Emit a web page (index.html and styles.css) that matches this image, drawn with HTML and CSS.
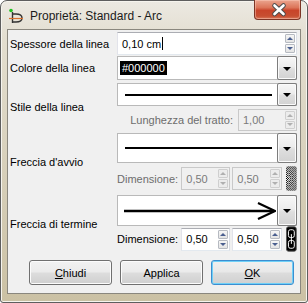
FILE: index.html
```html
<!DOCTYPE html>
<html lang="it">
<head>
    <meta charset="UTF-8">
    <title>Proprietà: Standard - Arc</title>
    <link rel="stylesheet" href="styles.css">
</head>
<body>
    <div class="window">
        <div class="titlebar">
            <svg class="app-icon" width="16" height="16" viewBox="0 0 16 16">
                <circle cx="3" cy="2.5" r="1.8" fill="#1fc21f"/>
                <path d="M4.5 4 V15" stroke="#333" stroke-width="1.4"/>
                <path d="M4.5 6 H8 C12 6 14 7.5 14 10 C14 12.5 12 14 8 14 H4.5" fill="none" stroke="#333" stroke-width="1.4"/>
                <path d="M1 10.5 H15" stroke="#d8702e" stroke-width="1.2"/>
            </svg>
            <span class="title">Proprietà: Standard - Arc</span>
            <div class="close">
                <svg width="46" height="19" viewBox="0 0 46 19">
                    <path d="M19.5 5.5 L28.5 14 M28.5 5.5 L19.5 14" stroke="#4c4c4c" stroke-width="4.6" stroke-linecap="round"/>
                    <path d="M19.5 5.5 L28.5 14 M28.5 5.5 L19.5 14" stroke="#fff" stroke-width="2.6" stroke-linecap="round"/>
                </svg>
            </div>
        </div>

        <div class="client">
            <div class="row r1">
                <div class="label">Spessore della linea</div>
                <div class="ctl">
                    <div class="spin full h24">
                        <span class="val">0,10 cm<span class="caret"></span></span>
                        <div class="arrows"><span class="up"></span><span class="down"></span></div>
                    </div>
                </div>
            </div>

            <div class="row r2">
                <div class="label">Colore della linea</div>
                <div class="ctl">
                    <div class="combo h24">
                        <div class="field"><span class="sel">#000000</span></div>
                        <div class="drop"></div>
                    </div>
                </div>
            </div>

            <div class="row r3">
                <div class="label">Stile della linea</div>
                <div class="ctl">
                    <div class="combo h23">
                        <div class="field"><span class="line"></span></div>
                        <div class="drop"></div>
                    </div>
                    <div class="sub sub-len">
                        <span class="muted">Lunghezza del tratto:</span>
                        <div class="spin off w60">
                            <span class="val">1,00</span>
                            <div class="arrows"><span class="up"></span><span class="down"></span></div>
                        </div>
                    </div>
                </div>
            </div>

            <div class="row r4">
                <div class="label">Freccia d'avvio</div>
                <div class="ctl">
                    <div class="combo h30">
                        <div class="field"><span class="line"></span></div>
                        <div class="drop"></div>
                    </div>
                    <div class="sub sub-dim h25">
                        <span class="dim-label muted">Dimensione:</span>
                        <div class="spin off w49">
                            <span class="val">0,50</span>
                            <div class="arrows"><span class="up"></span><span class="down"></span></div>
                        </div>
                        <div class="spin off w50">
                            <span class="val">0,50</span>
                            <div class="arrows"><span class="up"></span><span class="down"></span></div>
                        </div>
                        <svg class="chain" width="11" height="25" viewBox="0 0 11 25">
                            <defs>
                                <pattern id="dots" width="2" height="2" patternUnits="userSpaceOnUse">
                                    <rect width="2" height="2" fill="#fff"/>
                                    <rect width="1" height="1" fill="#000"/>
                                    <rect x="1" y="1" width="1" height="1" fill="#000"/>
                                </pattern>
                            </defs>
                            <rect x="0" y="0" width="11" height="25" rx="2" fill="url(#dots)"/>
                            <rect x="2.5" y="3.5" width="6" height="8" rx="2" fill="none" stroke="#9a9a9a"/>
                            <rect x="2.5" y="13.5" width="6" height="8" rx="2" fill="none" stroke="#9a9a9a"/>
                            <path d="M5.5 8 V17" stroke="#9a9a9a"/>
                        </svg>
                    </div>
                </div>
            </div>

            <div class="row r5">
                <div class="label">Freccia di termine</div>
                <div class="ctl">
                    <div class="combo h31">
                        <div class="field">
                            <svg class="arrow-line" width="152" height="20" viewBox="0 0 152 20">
                                <path d="M0 10 H150" stroke="#000" stroke-width="2.4"/>
                                <path d="M134 2 L151 10 L134 18" fill="none" stroke="#000" stroke-width="2.2"/>
                            </svg>
                        </div>
                        <div class="drop"></div>
                    </div>
                    <div class="sub sub-dim h26">
                        <span class="dim-label">Dimensione:</span>
                        <div class="spin w49 h24">
                            <span class="val">0,50</span>
                            <div class="arrows"><span class="up"></span><span class="down"></span></div>
                        </div>
                        <div class="spin w50 h24">
                            <span class="val">0,50</span>
                            <div class="arrows"><span class="up"></span><span class="down"></span></div>
                        </div>
                        <svg class="chain" width="11" height="26" viewBox="0 0 11 26">
                            <rect x="0.5" y="0.5" width="10" height="25" rx="2" fill="#000" stroke="#555"/>
                            <rect x="2.5" y="3.5" width="6" height="8" rx="2" fill="none" stroke="#fff"/>
                            <rect x="2.5" y="14.5" width="6" height="8" rx="2" fill="none" stroke="#fff"/>
                            <path d="M5.5 8 V18" stroke="#fff"/>
                        </svg>
                    </div>
                </div>
            </div>

            <div class="buttons">
                <div class="btn"><span><u>C</u>hiudi</span></div>
                <div class="btn">Applica</div>
                <div class="btn default"><span><u>O</u>K</span></div>
            </div>
        </div>
    </div>
</body>
</html>
```

FILE: styles.css
```css
* {
    margin: 0px;
    padding: 0px;
    box-sizing: border-box;
}
body {
    width: 308px;
    height: 303px;
    overflow: hidden;
    background: #fff;
    font-family: "Liberation Sans", Arial, sans-serif;
    font-size: 11px;
    color: #000;
}
.window {
    width: 308px;
    height: 303px;
    border: 1px solid #5e5e5e;
    border-radius: 7px 7px 3px 3px;
    background: linear-gradient(#ece9e2, #e3ded0 12%, #cbc1a4);
    box-shadow: inset 0 0 0 1px #f6f4ee;
    display: flex;
    flex-direction: column;
}
.titlebar {
    height: 28px;
    display: flex;
    align-items: center;
}
.app-icon {
    margin-left: 7px;
    margin-top: 1px;
}
.title {
    margin-left: 6px;
    font-size: 12px;
    color: #1b1b1b;
    margin-top: 2px;
}
.close {
    align-self: flex-start;
    margin-left: auto;
    margin-right: 6px;
    margin-top: -1px;
    width: 47px;
    height: 20px;
    border: 1px solid #7c3526;
    border-top: none;
    border-radius: 0 0 4px 4px;
    background: linear-gradient(#eba58f, #dc7559 40%, #c8442a 55%, #c74e31 85%, #d8795c);
    box-shadow: inset 0 0 0 1px rgba(255, 210, 195, 0.45);
}
.close svg {
    display: block;
}
.client {
    margin: 0 6px;
    height: 265px;
    border: 1px solid #8a877e;
    background: #f0f0f0;
    padding: 2px 3px 0 2px;
    display: flex;
    flex-direction: column;
}
.row {
    display: flex;
    align-items: center;
}
.label {
    width: 107px;
    flex: none;
}
.ctl {
    width: 180px;
    display: flex;
    flex-direction: column;
}
.r2 {
    margin-top: 1px;
}
.r3 {
    margin-top: 3px;
}
.r4 {
    margin-top: 2px;
}
.r5 {
    margin-top: 4px;
}
.h23 { height: 23px; }
.h24 { height: 24px; }
.h25 { height: 25px; }
.h26 { height: 26px; }
.h30 { height: 30px; }
.h31 { height: 31px; }

/* text fields with spin arrows */
.spin {
    display: flex;
    align-items: center;
    background: #fff;
    border: 1px solid #abadb3;
    border-color: #abadb3 #dbdfe6 #e3e9ef #e2e3ea;
    height: 23px;
    flex: none;
}
.spin.full {
    width: 180px;
}
.w60 { width: 59px; }
.w49 { width: 49px; }
.w50 { width: 50px; }
.spin .val {
    flex: 1;
    padding-left: 4px;
    display: flex;
    align-items: center;
}
.caret {
    display: inline-block;
    width: 1px;
    height: 13px;
    background: #000;
    margin-left: 1px;
}
.arrows {
    width: 10px;
    align-self: stretch;
    display: flex;
    flex-direction: column;
    gap: 1px;
    margin: 1px 1px 1px 0;
}
.arrows span {
    flex: 1;
    border: 1px solid #b6bac1;
    border-radius: 1px;
    background: linear-gradient(#f5f5f5, #e4e4e4);
    display: flex;
    align-items: center;
    justify-content: center;
}
.arrows span::after {
    content: "";
    border-left: 3px solid transparent;
    border-right: 3px solid transparent;
}
.arrows .up::after {
    border-bottom: 3px solid #4a5f8f;
}
.arrows .down::after {
    border-top: 3px solid #4a5f8f;
}
.spin.off {
    background: #f0f0f0;
    border-color: #c9c9c9;
    color: #7a7a7a;
}
.spin.off .arrows span {
    border-color: #cfcfcf;
    background: #ececec;
}
.spin.off .arrows .up::after {
    border-bottom-color: #b0b0b0;
}
.spin.off .arrows .down::after {
    border-top-color: #b0b0b0;
}

/* drop-down lists */
.combo {
    display: flex;
    background: #fff;
    border: 1px solid #b9b9b9;
}
.combo .field {
    flex: 1;
    display: flex;
    align-items: center;
}
.sel {
    margin-left: 2px;
    padding: 1px 2px;
    background: #000;
    color: #fff;
}
.line {
    display: block;
    margin-left: 7px;
    width: 147px;
    height: 2px;
    background: #000;
}
.arrow-line {
    margin-left: 6px;
    display: block;
}
.drop {
    width: 20px;
    margin: -1px -1px -1px 0;
    border: 1px solid #7d7d7d;
    border-radius: 2px;
    background: linear-gradient(#f7f7f7, #ececec 45%, #dedede 55%, #d2d2d2);
    box-shadow: inset 0 0 0 1px #fbfbfb;
    display: flex;
    align-items: center;
    justify-content: center;
}
.drop::after {
    content: "";
    border-left: 4px solid transparent;
    border-right: 4px solid transparent;
    border-top: 4px solid #000;
    margin-top: 1px;
}

/* second lines under the combos */
.sub {
    display: flex;
    align-items: center;
}
.sub-len {
    margin-top: 3px;
    height: 22px;
    justify-content: flex-end;
}
.sub-len .spin {
    height: 22px;
    margin-left: 5px;
}
.muted {
    color: #6d6d6d;
}
.r4 .sub-dim {
    margin-top: 3px;
}
.dim-label {
    width: 66px;
}
.sub-dim .spin + .spin {
    margin-left: 2px;
}
.chain {
    margin-left: 4px;
    display: block;
}

/* dialog buttons */
.buttons {
    margin-top: 8px;
    padding-left: 19px;
    display: flex;
    gap: 8px;
}
.btn {
    width: 83px;
    height: 25px;
    border: 1px solid #707070;
    border-radius: 3px;
    background: linear-gradient(#f2f2f2, #ebebeb 48%, #dddddd 52%, #cfcfcf);
    box-shadow: inset 0 0 0 1px #fcfcfc;
    display: flex;
    align-items: center;
    justify-content: center;
}
.btn.default {
    border-color: #3c8ed0;
    box-shadow: inset 0 0 0 1px #6fd0f7;
    background: linear-gradient(#eaf6fd, #d9f0fc 48%, #bee6fd 52%, #a7d9f5);
    background: linear-gradient(#f0f0f0, #e8e8e8 48%, #dcdcdc 52%, #d0d0d0);
}
```
